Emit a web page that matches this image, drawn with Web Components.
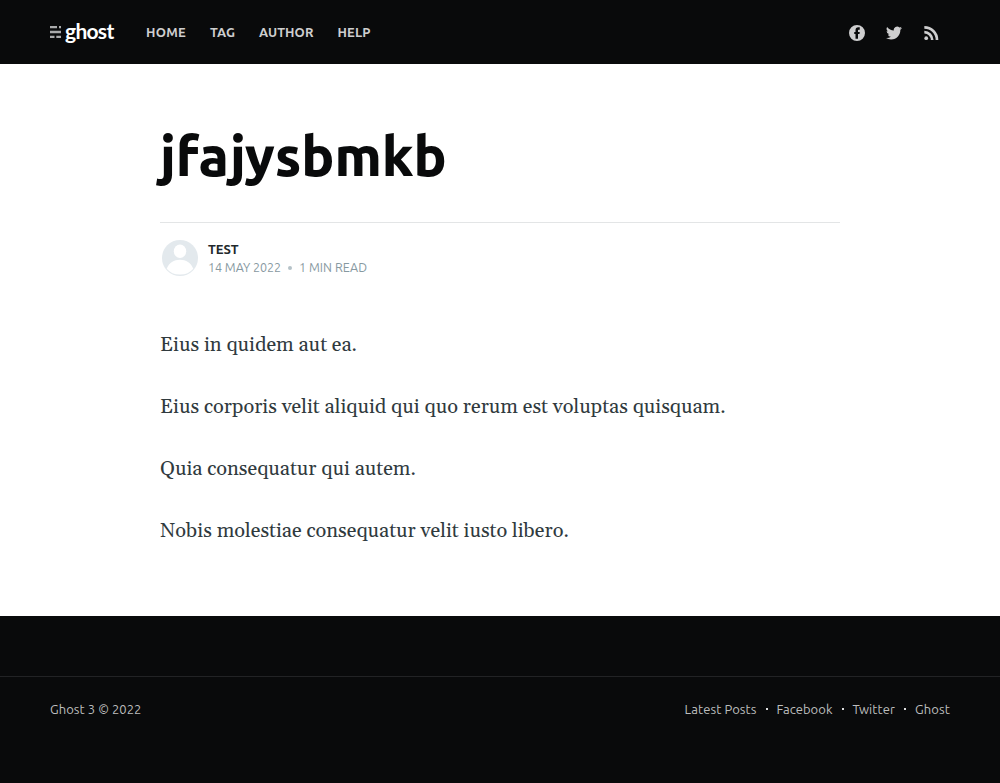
<!DOCTYPE html>
<html lang="en">
<head>
<meta charset="utf-8">
<title>jfajysbmkb</title>
<style>
html,body{margin:0;background:#fff}
body{font-family:Ubuntu,"Noto Sans","Open Sans",sans-serif;color:#303a3e}
</style>
</head>
<body>
<ghost-page></ghost-page>
<script>
const define = (name, html, ready) => customElements.define(name, class extends HTMLElement {
  connectedCallback() {
    if (this.shadowRoot) return;
    this.attachShadow({mode: 'open'}).innerHTML = html;
    if (ready) ready(this);
  }
});

/* Text tracked out or in to a set measure */
define('tracked-text', `<style>:host{display:block;white-space:nowrap;width:max-content}span{display:inline-block;white-space:pre}</style><span><slot></slot></span>`, el => {
  const span = el.shadowRoot.querySelector('span');
  const target = Number(el.getAttribute('measure'));
  const n = el.textContent.length;
  el.style.letterSpacing = '0px';
  const natural = span.getBoundingClientRect().width;
  const gap = (target - natural) / n;
  el.style.letterSpacing = Math.abs(gap) < 0.02 ? 'normal' : gap.toFixed(4) + 'px';
  el.style.width = target + 'px';
});

define('site-logo', `<style>
:host{display:flex;align-items:center;height:64px;width:64px;color:#fff}
svg{display:block;margin-right:4px;flex:none}
tracked-text{font:700 21px/24px Lato,sans-serif;margin-top:-3px}
</style>
<svg width="11" height="12" viewBox="0 0 11 12" fill="#a9aaab"><path d="M0 0h7v2.300H0zM9 0H11v2.300H9zM0 4.800h11v2.400H0zM0 9.700h4.500V12H0zM6.300 9.700H11V12H6.300z"/></svg>
<tracked-text measure="48.500">ghost</tracked-text>`);

define('social-icon', `<style>:host{display:block;width:16px;height:16px}svg{display:block;fill:#cececf}</style><svg width="16" height="16"></svg>`, el => {
  const svg = el.shadowRoot.querySelector('svg');
  const shapes = {
    facebook: ['0 0 32 32', '<path d="M16 0A16 16 0 1 0 16 32A16 16 0 0 0 16 0ZM21.500 9.500h-2.300c-1 0-1.200.5-1.200 1.200V14H21.500l-.5 4h-3v9.500h-5V18H10.500v-4h2.500v-3.300c0-3.800 2-6 5.500-6H21.500Z"/>'],
    twitter: ['0 0 24 24', '<path d="M24 4.600a10 10 0 0 1-2.800.8 5 5 0 0 0 2.100-2.700 10 10 0 0 1-3.100 1.200 4.900 4.900 0 0 0-8.400 4.500A14 14 0 0 1 1.700 3.100a4.900 4.900 0 0 0 1.500 6.600 5 5 0 0 1-2.200-.6 4.900 4.900 0 0 0 3.900 4.900 5 5 0 0 1-2.200.1 4.900 4.900 0 0 0 4.600 3.400A10 10 0 0 1 0 19.500a14 14 0 0 0 7.500 2.200c9.100 0 14-7.500 14-14v-.6A10 10 0 0 0 24 4.600Z"/>'],
    rss: ['0 0 24 24', '<circle cx="4.800" cy="19.700" r="2.800"/><path d="M2 8.700v4a9.800 9.800 0 0 1 9.800 9.800H15.800A13.800 13.800 0 0 0 2 8.700ZM2 1.500v4A17 17 0 0 1 19 22.500H23A21 21 0 0 0 2 1.500Z"/>']
  };
  const [box, art] = shapes[el.getAttribute('kind')];
  svg.setAttribute('viewBox', box);
  svg.innerHTML = art;
});

define('site-header', `<style>
:host{display:flex;box-sizing:border-box;height:64px;padding:0 61px 0 50px;background:#090a0b;align-items:center}
nav{display:flex;gap:24px;margin-left:32px;font:600 13px/20px Ubuntu,"Noto Sans",sans-serif;color:#cececf}
aside{display:flex;gap:21px;margin-left:auto;padding-top:2px}
</style>
<site-logo></site-logo>
<nav><tracked-text measure="40">HOME</tracked-text><tracked-text measure="25">TAG</tracked-text><tracked-text measure="54.500">AUTHOR</tracked-text><tracked-text measure="33">HELP</tracked-text></nav>
<aside><social-icon kind="facebook"></social-icon><social-icon kind="twitter"></social-icon><social-icon kind="rss"></social-icon></aside>`);

define('post-byline', `<style>
:host{display:flex;padding:17px 2px 0;gap:10px}
svg{display:block;flex:none}
.copy{font-size:12.500px;line-height:18px}
.name{font-size:13px;font-weight:600;color:#22282b}
.meta{display:flex;color:#8799a1}
.dot{width:4px;height:4px;border-radius:50%;background:#b5c2c8;margin:8px 7px 0}
</style>
<svg width="36" height="36" viewBox="0 0 36 36"><circle cx="18" cy="18" r="18" fill="#e3e9ed"/><ellipse cx="18" cy="11.300" rx="6.200" ry="6.800" fill="#fff"/><path d="M4.700 28.700C7 23 12 19.800 18 19.800s11 3.200 13.300 8.900A17 17 0 0 1 18 34.600 17 17 0 0 1 4.700 28.700Z" fill="#fff"/></svg>
<div class="copy"><tracked-text class="name" measure="30.500">TEST</tracked-text><div class="meta"><tracked-text measure="73">14 MAY 2022</tracked-text><span class="dot"></span><tracked-text measure="68">1 MIN READ</tracked-text></div></div>`);

define('post-body', `<style>
:host{display:flex;flex-direction:column;gap:30px;padding-top:53px;font:20px/32px Georgia,Gelasio,"Liberation Serif",serif;color:#303a3e}
</style>
<tracked-text measure="197">Eius in quidem aut ea.</tracked-text>
<tracked-text measure="565.500">Eius corporis velit aliquid qui quo rerum est voluptas quisquam.</tracked-text>
<tracked-text measure="256">Quia consequatur qui autem.</tracked-text>
<tracked-text measure="409">Nobis molestiae consequatur velit iusto libero.</tracked-text>`);

define('post-article', `<style>
:host{display:block;box-sizing:border-box;width:680px;height:552px;margin:0 auto;padding-top:58px}
header{height:100px;border-bottom:1px solid #e3e5e6}
h1{margin:0;font:800 55px/68px Ubuntu,"Noto Sans",sans-serif;color:#090a0b}
</style>
<header><h1><tracked-text measure="286.500">jfajysbmkb</tracked-text></h1></header>
<post-byline></post-byline>
<post-body></post-body>`);

define('site-footer', `<style>
:host{display:block;box-sizing:border-box;height:167px;padding-top:60px;background:#090a0b;color:#bdbebe;font-size:13px;line-height:20px}
.row{display:flex;justify-content:space-between;border-top:1px solid #222325;padding:22px 50px 0}
nav{display:flex}
i{width:2px;height:2px;background:#dededf;margin:9px 9px 0}
</style>
<div class="row"><tracked-text measure="91.500">Ghost 3 © 2022</tracked-text>
<nav><tracked-text measure="72">Latest Posts</tracked-text><i></i><tracked-text measure="56">Facebook</tracked-text><i></i><tracked-text measure="42.500">Twitter</tracked-text><i></i><tracked-text measure="35">Ghost</tracked-text></nav></div>`);

define('ghost-page', `<style>:host{display:block;height:783px;overflow:hidden}</style><site-header></site-header><post-article></post-article><site-footer></site-footer>`);
</script>
</body>
</html>
